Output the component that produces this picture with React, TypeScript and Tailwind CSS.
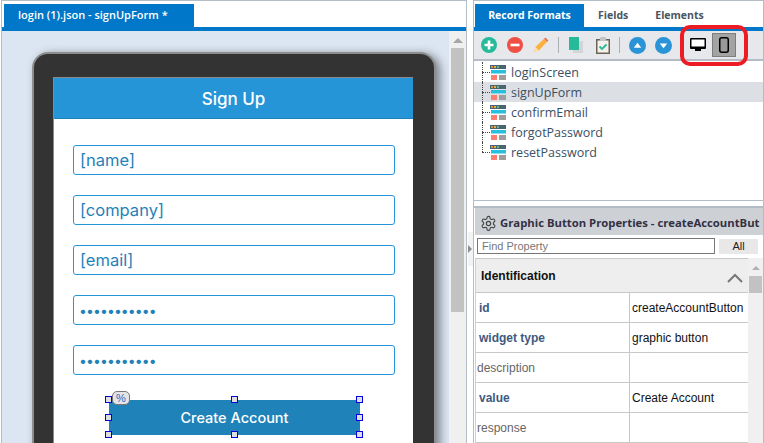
const formFields = ['[name]', '[company]', '[email]']

const formats = ['loginScreen', 'signUpForm', 'confirmEmail', 'forgotPassword', 'resetPassword']

const props = [
  { name: 'id', value: 'createAccountButton', bold: true },
  { name: 'widget type', value: 'graphic button', bold: true },
  { name: 'description', value: '', bold: false },
  { name: 'value', value: 'Create Account', bold: true },
  { name: 'response', value: '', bold: false },
]

function FormatIcon() {
  return (
    <svg width="16" height="15" viewBox="0 0 16 15" className="shrink-0">
      <rect x="0" y="0" width="16" height="4" fill="#4a6572" />
      <rect x="1" y="1" width="2" height="2" fill="#e08a5a" />
      <rect x="4" y="1" width="2" height="2" fill="#d9b44a" />
      <rect x="7" y="1" width="2" height="2" fill="#6fb07a" />
      <rect x="1" y="5" width="15" height="3" fill="#27c0dc" />
      <rect x="1" y="8" width="15" height="1" fill="#8fdcec" />
      <rect x="1" y="10" width="6" height="5" fill="#fb8072" />
      <rect x="9" y="10" width="7" height="5" fill="#9e9e9e" />
    </svg>
  )
}

function RoundIcon({ bg, size, children }: { bg: string; size: number; children: React.ReactNode }) {
  return (
    <svg width={size} height={size} viewBox="0 0 16 16" className="shrink-0">
      <circle cx="8" cy="8" r="8" fill={bg} />
      {children}
    </svg>
  )
}

function Toolbar() {
  return (
    <div className="relative flex h-[30px] shrink-0 items-center border-b-[2px] border-[#b4bdc6] bg-[#e6e8ec] pl-[7px]">
      <RoundIcon bg="#26b99a" size={16}>
        <path d="M8 3.5v9M3.5 8h9" stroke="#fff" strokeWidth="2.6" />
      </RoundIcon>
      <div className="w-[10px]" />
      <RoundIcon bg="#ef5046" size={16}>
        <path d="M3.5 8h9" stroke="#fff" strokeWidth="2.6" />
      </RoundIcon>
      <div className="w-[10px]" />
      <svg width="16" height="16" viewBox="0 0 16 16" className="shrink-0">
        <path d="M1 15l1.5-5L11 1.8l3.2 3L5.8 13.4z" fill="#fbb040" />
        <path d="M11 1.8l1.4-1.2 3 3-1.2 1.2z" fill="#ef6a5a" />
        <path d="M1 15l1.5-5 3.3 3.4z" fill="#fde2b0" />
      </svg>
      <div className="ml-[9px] mr-[10px] h-[16px] w-px bg-[#a9b0b6]" />
      <svg width="14" height="16" viewBox="0 0 14 16" className="shrink-0">
        <rect x="4" y="4" width="10" height="12" fill="#d2d4d6" />
        <rect x="0" y="0" width="10" height="13" fill="#26b99a" />
      </svg>
      <div className="w-[13px]" />
      <svg width="14" height="17" viewBox="0 0 14 17" className="shrink-0">
        <rect x="0.75" y="2.75" width="12.5" height="13.5" fill="#f4f1ea" stroke="#6d6259" strokeWidth="1.5" />
        <rect x="4" y="0" width="6" height="4" rx="1" fill="#bfc6c8" />
        <path d="M3.5 9.5l2.5 2.5 4.5-4.5" fill="none" stroke="#26b99a" strokeWidth="1.8" />
      </svg>
      <div className="ml-[9px] mr-[9px] h-[16px] w-px bg-[#a9b0b6]" />
      <RoundIcon bg="#2a94d6" size={17}>
        <path d="M4.5 10L8 5.5l3.5 4.5z" fill="#fff" />
      </RoundIcon>
      <div className="w-[9px]" />
      <RoundIcon bg="#2a94d6" size={17}>
        <path d="M4.5 6L8 10.5 11.5 6z" fill="#fff" />
      </RoundIcon>
      <svg width="16" height="14" viewBox="0 0 16 14" className="ml-[18px] shrink-0">
        <rect x="0" y="0" width="16" height="11" rx="1" fill="#000" />
        <rect x="1.5" y="1.5" width="13" height="7" fill="#fff" />
        <rect x="5" y="11" width="6" height="2" fill="#000" />
      </svg>
      <div className="ml-[6px] flex h-[24px] w-[24px] items-center justify-center border border-[#7d7d7d] bg-[#a3a3a3]">
        <svg width="10" height="16" viewBox="0 0 10 16">
          <rect x="0.75" y="0.75" width="8.5" height="14.5" rx="2" fill="#9a9a9a" stroke="#000" strokeWidth="1.5" />
        </svg>
      </div>
      <div className="absolute left-[206px] top-[-6px] h-[41px] w-[68px] rounded-[10px] border-[4px] border-[#ec1c24]" />
    </div>
  )
}

function Handle({ className }: { className: string }) {
  return <div className={`absolute h-[7px] w-[7px] border border-[#0000e0] bg-[#dedede] ${className}`} />
}

function LeftPane() {
  return (
    <div className="ml-[1px] flex h-full w-[466px] shrink-0 flex-col overflow-hidden border border-b-0 border-[#b4bdc6]">
      <div className="flex h-[26px] shrink-0 items-end bg-white pl-[2px]">
        <div className="flex h-[23px] w-[190px] items-center bg-[#0077c8] pl-[14px] font-['Open_Sans',sans-serif] text-[11px] font-semibold text-white">
          login (1).json - signUpForm *
        </div>
      </div>
      <div className="h-[4px] shrink-0 bg-[#0077c8]" />
      <div className="flex min-h-0 flex-1">
        <div className="min-w-0 flex-1 overflow-hidden bg-[#dce6f2] pl-[30px] pt-[21px]">
          <div className="h-[500px] w-[404px] rounded-[16px] border-[2px] border-b-0 border-[#8d8d8d] bg-[#333333] pl-[19px] pt-[23px] shadow-[4px_2px_10px_rgba(0,0,0,0.45)]">
            <div className="h-[450px] w-[360px] border-l border-t border-[#8a8a8a] bg-white">
              <div className="flex h-[41px] items-center justify-center border-b border-[#1f82b8] bg-[#2595d8] pt-[3px] font-['Inter',sans-serif] text-[17px] font-medium text-white">
                Sign Up
              </div>
              <div className="flex flex-col gap-[20px] px-[19px] pt-[26px]">
                {formFields.map((field) => (
                  <div
                    key={field}
                    className="flex h-[30px] w-[322px] items-center rounded-[3px] border border-[#2595d8] pl-[6px] font-['Inter',sans-serif] text-[16.5px] text-[#1f82b8]"
                  >
                    {field}
                  </div>
                ))}
                {[0, 1].map((i) => (
                  <div
                    key={i}
                    className="flex h-[30px] w-[322px] items-center rounded-[3px] border border-[#2595d8] pl-[5px] font-['Inter',sans-serif] text-[14px] tracking-[-0.9px] text-[#1f82b8]"
                  >
                    •••••••••••
                  </div>
                ))}
              </div>
              <div className="relative ml-[55px] mt-[25px] flex h-[35px] w-[251px] items-center justify-center bg-[#1f82b8] font-['Inter',sans-serif] text-[14.5px] font-medium text-white">
                Create Account
                <Handle className="left-[-4px] top-[-4px]" />
                <Handle className="left-[122px] top-[-4px]" />
                <Handle className="left-[247px] top-[-4px]" />
                <Handle className="left-[-4px] top-[14px]" />
                <Handle className="left-[247px] top-[14px]" />
                <Handle className="left-[-4px] top-[31px]" />
                <Handle className="left-[122px] top-[31px]" />
                <Handle className="left-[247px] top-[31px]" />
                <div className="absolute left-[3px] top-[-9px] flex h-[14px] w-[18px] items-center justify-center rounded-[5px] border border-[#777] bg-[#e4e4e4] font-['Liberation_Sans',sans-serif] text-[11px] text-[#1f6fc8]">
                  %
                </div>
              </div>
            </div>
          </div>
        </div>
        <div className="w-[17px] shrink-0 bg-[#f0f0f0] pt-[7px]">
          <div className="mx-auto h-0 w-0 border-x-[5px] border-b-[5px] border-x-transparent border-b-[#a6a6a6]" />
          <div className="mx-[2px] mt-[5px] h-[264px] bg-[#c2c2c2]" />
        </div>
      </div>
    </div>
  )
}

function Splitter() {
  return (
    <div className="flex w-[6px] shrink-0 items-center justify-center bg-white">
      <div className="mt-[54px] flex h-[34px] w-[5px] items-center justify-center bg-[#f3f3f3]">
        <div className="h-0 w-0 border-y-[4px] border-l-[4px] border-y-transparent border-l-[#8d8d8d]" />
      </div>
    </div>
  )
}

function RightPane() {
  return (
    <div className="flex h-full min-w-0 flex-1 flex-col overflow-hidden border-x border-t border-[#b4bdc6]">
      <div className="flex h-[26px] shrink-0 items-end bg-white pl-[1px] font-['Open_Sans',sans-serif] text-[10.5px] font-bold">
        <div className="flex h-[23px] w-[109px] items-center justify-center bg-[#0077c8] text-white">Record Formats</div>
        <div className="flex h-[23px] items-center px-[14px] text-[#4a5560]">Fields</div>
        <div className="flex h-[23px] items-center pl-[13px] text-[#4a5560]">Elements</div>
      </div>
      <div className="h-[4px] shrink-0 bg-[#0077c8]" />
      <Toolbar />
      <div className="flex h-[139px] shrink-0 flex-col bg-white pt-[1px] font-['Open_Sans',sans-serif] text-[12.5px] text-[#3b4f63]">
        {formats.map((f, i) => (
          <div key={f} className={`relative flex h-[20px] items-center pl-[16px] ${i === 1 ? 'bg-[#dcdfe3]' : ''}`}>
            <div className={`absolute left-[8px] top-0 w-px border-l border-dotted border-[#444] ${i === 4 ? 'h-[10px]' : 'h-[20px]'}`} />
            <div className="absolute left-[8px] top-[10px] w-[8px] border-t border-dotted border-[#444]" />
            <FormatIcon />
            <span className="ml-[5px] pt-[2px]">{f}</span>
          </div>
        ))}
      </div>
      <div className="h-[8px] shrink-0 border-b-[2px] border-t border-[#b4bdc6] bg-white" />
      <div className="ml-[1px] flex min-h-0 flex-1 flex-col bg-[#cdd1d6]">
        <div className="flex h-[27px] shrink-0 items-center gap-[3px] overflow-hidden whitespace-nowrap pl-[5px] pt-[3px] font-['Open_Sans',sans-serif] text-[11.3px] font-bold text-[#333044]">
          <svg width="17" height="17" viewBox="0 0 24 24" fill="none" stroke="#444" strokeWidth="1.6" className="shrink-0">
            <path d="M12.2 2h-.4a2 2 0 0 0-2 2v.2a2 2 0 0 1-1 1.7l-.4.2a2 2 0 0 1-2 0l-.2-.1a2 2 0 0 0-2.7.7l-.2.4a2 2 0 0 0 .7 2.7l.2.1a2 2 0 0 1 1 1.7v.5a2 2 0 0 1-1 1.7l-.2.1a2 2 0 0 0-.7 2.7l.2.4a2 2 0 0 0 2.7.7l.2-.1a2 2 0 0 1 2 0l.4.2a2 2 0 0 1 1 1.7v.2a2 2 0 0 0 2 2h.4a2 2 0 0 0 2-2v-.2a2 2 0 0 1 1-1.7l.4-.2a2 2 0 0 1 2 0l.2.1a2 2 0 0 0 2.7-.7l.2-.4a2 2 0 0 0-.7-2.7l-.2-.1a2 2 0 0 1-1-1.7v-.5a2 2 0 0 1 1-1.7l.2-.1a2 2 0 0 0 .7-2.7l-.2-.4a2 2 0 0 0-2.7-.7l-.2.1a2 2 0 0 1-2 0l-.4-.2a2 2 0 0 1-1-1.7V4a2 2 0 0 0-2-2z" />
            <circle cx="12" cy="12" r="3" />
          </svg>
          Graphic Button Properties - createAccountBut
        </div>
        <div className="flex h-[23px] shrink-0 items-start bg-white pl-[2px] pt-[3px] font-['Liberation_Sans',sans-serif] text-[11px]">
          <div className="flex h-[16px] w-[238px] items-center border border-[#777] pl-[4px] pt-[1px] text-[#777]">Find Property</div>
          <div className="ml-[4px] mt-[1px] flex h-[15px] w-[39px] items-center justify-center bg-[#e8e8e8] text-[#222]">All</div>
        </div>
        <div className="flex min-h-0 flex-1 bg-white">
          <div className="min-w-0 flex-1 overflow-hidden border-l border-[#cdd1d6] font-['Liberation_Sans',sans-serif] text-[12px]">
            <div className="flex h-[35px] items-center justify-between border-y border-[#c8c8c8] bg-[#eeeeee] pl-[5px] pr-[5px] font-bold text-[#111]">
              Identification
              <svg width="16" height="10" viewBox="0 0 16 10" fill="none" stroke="#777" strokeWidth="2" className="mt-[5px]">
                <path d="M1 9l7-7 7 7" />
              </svg>
            </div>
            {props.map((p) => (
              <div key={p.name} className="flex h-[30px] border-b border-[#c8c8c8]">
                <div className={`flex w-[154px] shrink-0 items-center border-r border-[#c8c8c8] ${p.bold ? 'pl-[3px] font-bold text-[#3e5a80]' : 'pl-[1px] text-[#666]'}`}>
                  {p.name}
                </div>
                <div className="flex min-w-0 flex-1 items-center overflow-hidden whitespace-nowrap pl-[2px] text-[#111]">{p.value}</div>
              </div>
            ))}
          </div>
          <div className="w-[15px] shrink-0 bg-[#f0f0f0] pt-[8px]">
            <div className="mx-auto h-0 w-0 border-x-[4px] border-b-[4px] border-x-transparent border-b-[#b0b0b0]" />
            <div className="mx-[1px] mt-[6px] h-[17px] bg-[#c2c2c2]" />
          </div>
        </div>
      </div>
    </div>
  )
}

export default function App() {
  return (
    <div className="flex h-[443px] w-[764px] overflow-hidden bg-white">
      <LeftPane />
      <Splitter />
      <RightPane />
    </div>
  )
}
